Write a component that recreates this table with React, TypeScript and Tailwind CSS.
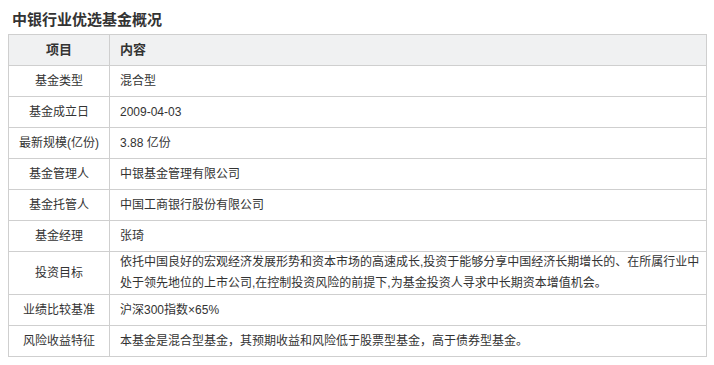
const rows: { label: string; value: React.ReactNode }[] = [
  { label: "基金类型", value: "混合型" },
  { label: "基金成立日", value: "2009-04-03" },
  { label: "最新规模(亿份)", value: "3.88 亿份" },
  { label: "基金管理人", value: "中银基金管理有限公司" },
  { label: "基金托管人", value: "中国工商银行股份有限公司" },
  { label: "基金经理", value: "张琦" },
  {
    label: "投资目标",
    value: (
      <>
        依托中国良好的宏观经济发展形势和资本市场的高速成长,投资于能够分享中国经济长期增长的、在所属行业中
        <br />
        处于领先地位的上市公司,在控制投资风险的前提下,为基金投资人寻求中长期资本增值机会。
      </>
    ),
  },
  { label: "业绩比较基准", value: "沪深300指数×65%" },
  { label: "风险收益特征", value: "本基金是混合型基金，其预期收益和风险低于股票型基金，高于债券型基金。" },
];

const App = () => {
  return (
    <div
      className="w-[714px] h-[365px] bg-white text-[#333] px-2"
      style={{ fontFamily: '"Liberation Sans", "Noto Sans CJK SC", sans-serif' }}
    >
      <div className="h-[34px] pt-[9px] pl-1">
        <h1 className="text-[15px] font-bold leading-[22px] text-[#333]">中银行业优选基金概况</h1>
      </div>
      <table className="w-[699px] border-collapse table-fixed text-[12px]">
        <colgroup>
          <col className="w-[101px]" />
          <col />
        </colgroup>
        <thead>
          <tr className="h-[31px] bg-[#f0f1f2]">
            <th className="border border-[#cfcfcf] text-center font-bold text-[13px]">项目</th>
            <th className="border border-[#cfcfcf] text-left font-bold text-[13px] pl-[10px]">内容</th>
          </tr>
        </thead>
        <tbody>
          {rows.map((r) => (
            <tr key={r.label} className={r.label === "投资目标" ? "h-[42px]" : "h-[31px]"}>
              <td className="border border-[#cfcfcf] text-center whitespace-nowrap">{r.label}</td>
              <td className="border border-[#cfcfcf] pl-[10px] leading-[21px] whitespace-nowrap">{r.value}</td>
            </tr>
          ))}
        </tbody>
      </table>
    </div>
  );
};

export default App;
